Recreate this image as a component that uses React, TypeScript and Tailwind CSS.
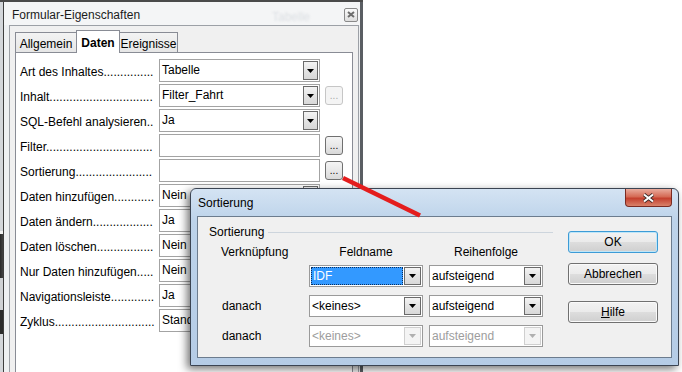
import React, { useMemo } from "react";

type Row = { label: string; value: string; list?: boolean; btn?: "on" | "off" };

const rows: Row[] = [
  { label: "Art des Inhaltes", value: "Tabelle", list: true },
  { label: "Inhalt", value: "Filter_Fahrt", list: true, btn: "off" },
  { label: "SQL-Befehl analysieren", value: "Ja", list: true },
  { label: "Filter", value: "", btn: "on" },
  { label: "Sortierung", value: "", btn: "on" },
  { label: "Daten hinzufügen", value: "Nein", list: true },
  { label: "Daten ändern", value: "Ja", list: true },
  { label: "Daten löschen", value: "Nein", list: true },
  { label: "Nur Daten hinzufügen", value: "Nein", list: true },
  { label: "Navigationsleiste", value: "Ja", list: true },
  { label: "Zyklus", value: "Standard", list: true },
];

// pad label with dots up to the field column, like the property browser does
function useDots(label: string) {
  return useMemo(() => {
    const ctx = document.createElement("canvas").getContext("2d");
    if (!ctx) return "..........";
    ctx.font = "12px 'Liberation Sans'";
    const w = ctx.measureText(label).width;
    const dot = ctx.measureText(".").width || 3.3;
    return ".".repeat(Math.max(0, Math.floor((135 - w) / dot)));
  }, [label]);
}

function Tri({ off }: { off?: boolean }) {
  return (
    <svg width="7" height="4" viewBox="0 0 7 4" className="block">
      <path d="M0 0H7L3.5 4Z" fill={off ? "#b0b0b0" : "#000"} />
    </svg>
  );
}

function DropBtn({ off, wide }: { off?: boolean; wide?: boolean }) {
  return (
    <div
      className={`${wide ? "w-[17px]" : "w-[15px]"} shrink-0 flex items-center justify-center border ${
        off
          ? "border-[#cfcfcf] bg-[#f4f4f4]"
          : "border-[#6a6a6a] bg-[linear-gradient(#f3f3f3,#e4e4e4_50%,#d8d8d8)]"
      }`}
    >
      <Tri off={off} />
    </div>
  );
}

function Ellipsis({ off }: { off?: boolean }) {
  return (
    <div
      className={`ml-[5px] w-[18px] h-[19px] rounded-[3px] border flex items-center justify-center text-[10px] leading-[10px] ${
        off
          ? "border-[#c6c6c6] bg-[#f4f4f4] text-[#a8a8a8]"
          : "border-[#707070] bg-[linear-gradient(#f4f4f4,#e8e8e8_50%,#d9d9d9)] text-black"
      }`}
    >
      ...
    </div>
  );
}

function PropRow({ row }: { row: Row }) {
  const dots = useDots(row.label);
  return (
    <div className="flex items-center h-[23px]">
      <div className="w-[137px] mr-[2px] whitespace-nowrap leading-[16px] pt-[2px]">
        {row.label}
        {dots}
      </div>
      <div className="w-[161px] h-[23px] shrink-0 flex border border-[#a3a3a3] bg-white p-[1px]">
        <div className="flex-1 pl-[1px] pt-[1px] leading-[16px] whitespace-nowrap">{row.value}</div>
        {row.list && <DropBtn />}
      </div>
      {row.btn && <Ellipsis off={row.btn === "off"} />}
    </div>
  );
}

function Combo({ text, sel, off }: { text: string; sel?: boolean; off?: boolean }) {
  return (
    <div className="w-[114px] h-[22px] shrink-0 flex border border-[#9a9a9a] bg-white p-[1px]">
      <div
        className={`flex-1 flex items-center pl-[1px] mr-[1px] whitespace-nowrap ${
          sel
            ? "bg-[#3399ff] text-white border border-dotted border-[#0b2f5c]"
            : off
            ? "text-[#9d9d9d]"
            : "text-black"
        }`}
      >
        {text}
      </div>
      <DropBtn off={off} wide />
    </div>
  );
}

function Btn({ children, def }: { children: React.ReactNode; def?: boolean }) {
  return (
    <div
      className={`h-[22px] rounded-[3px] border flex items-center justify-center bg-[linear-gradient(#f2f2f2,#ebebeb_48%,#dddddd_52%,#cfcfcf)] ${
        def
          ? "border-[#3c9bd6] shadow-[inset_0_0_0_1px_#bfe6f8]"
          : "border-[#707070] shadow-[inset_0_0_0_1px_#fafafa]"
      }`}
    >
      {children}
    </div>
  );
}

export default function App() {
  return (
    <div className="relative w-[682px] h-[372px] overflow-hidden bg-white font-['Liberation_Sans',Arial,sans-serif] text-[12px] text-black">
      <div className="w-[363px] h-[2px] bg-[#4a4a4a]" />
      <div className="flex h-[380px]">
        {/* window behind */}
        <div className="w-[3px] flex flex-col">
          <div className="h-[229px] bg-[#d3d6da]" />
          <div className="h-[3px] bg-[#f2f2f2]" />
          <div className="h-[44px] bg-[linear-gradient(90deg,#2a2a2a,#444)]" />
          <div className="h-[32px] bg-[#cfd1d4]" />
          <div className="h-[24px] bg-[#2c2c2c]" />
          <div className="flex-1 bg-[#d3d6da]" />
        </div>

        {/* Formular-Eigenschaften */}
        <div className="w-[360px] border-l border-l-[#3e3e3e] border-r-[3px] border-r-[#5a5e63] bg-[#eef0f2] flex flex-col">
          <div className="relative h-[23px] shrink-0 flex items-center justify-between pl-[8px] pr-[2px] bg-[#f4f5f6]">
            <span className="pt-[2px] text-[#1b1b1b]">Formular-Eigenschaften</span>
            <span className="absolute left-[268px] top-[6px] text-[#dcdfe3] blur-[1px]">Tabelle</span>
            <div className="mt-[2px] w-[14px] h-[14px] rounded-[2px] border border-[#8a8a8a] bg-[linear-gradient(#fafafa,#dedede)] flex items-center justify-center">
              <svg width="8" height="7" viewBox="0 0 8 7">
                <path d="M1 1L7 6M7 1L1 6" stroke="#6d6d6d" strokeWidth="2" />
              </svg>
            </div>
          </div>
          <div className="flex-1 ml-[5px] mr-[1px] border border-[#9ca0a6] bg-[#f0f0f0] pt-[4px] px-[5px] flex flex-col">
            <div className="flex items-end h-[22px] shrink-0">
              <div className="w-[61px] h-[20px] border-l border-t border-[#898c95] bg-[linear-gradient(#f3f3f3,#e6e6e6)] flex items-center justify-center pt-[2px]">
                Allgemein
              </div>
              <div className="relative z-10 -mb-[1px] w-[44px] h-[23px] border-x border-t border-[#898c95] bg-white flex items-center justify-center font-bold pt-[1px]">
                Daten
              </div>
              <div className="w-[58px] h-[20px] border-r border-t border-[#898c95] bg-[linear-gradient(#f3f3f3,#e6e6e6)] flex items-center justify-center pt-[2px]">
                Ereignisse
              </div>
            </div>
            <div className="flex-1 border border-[#898c95] bg-white pt-[6px] pl-[4px] flex flex-col gap-[2px]">
              {rows.map((r) => (
                <PropRow key={r.label} row={r} />
              ))}
            </div>
          </div>
        </div>
      </div>

      {/* Sortierung dialog */}
      <div className="absolute left-[190px] top-[188px] w-[489px] h-[178px] rounded-t-[6px] border border-[#3b4452] bg-[linear-gradient(180deg,#d4e3f3,#bdd3ea_18%,#b5cce6)] shadow-[-3px_3px_9px_rgba(0,0,0,0.55)] flex flex-col">
        <div className="h-[27px] shrink-0 flex justify-between">
          <span className="self-center pl-[7px] text-black">Sortierung</span>
          <div className="mr-[6px] w-[47px] h-[18px] rounded-b-[4px] border border-t-0 border-[#7a2b22] bg-[linear-gradient(#e9ab9d,#d56a55_45%,#c4402e_55%,#d9826a)] flex items-center justify-center">
            <svg width="13" height="10" viewBox="0 0 13 10">
              <path d="M2 1.5L11 8.5M11 1.5L2 8.5" stroke="#3a2a28" strokeWidth="3.6" />
              <path d="M2 1.5L11 8.5M11 1.5L2 8.5" stroke="#fff" strokeWidth="2" />
            </svg>
          </div>
        </div>
        <div className="mx-[6px] h-[142px] border border-[#6c7c8e] bg-[#f0f0f0] flex">
          <div className="w-[355px] flex flex-col">
            <div className="mt-[7px] h-[16px] flex items-center pl-[11px]">
              <span>Sortierung</span>
              <div className="flex-1 ml-[4px] h-px bg-[#cdd5dd]" />
            </div>
            <div className="mt-[4px] h-[16px] flex items-center pl-[23px]">
              <div className="w-[88px]">Verknüpfung</div>
              <div className="w-[114px] text-center">Feldname</div>
              <div className="ml-[6px] w-[114px] text-center">Reihenfolge</div>
            </div>
            <div className="mt-[5px] flex flex-col gap-[8px] pl-[23px]">
              <div className="flex items-center h-[22px]">
                <div className="w-[88px]" />
                <Combo text="IDF" sel />
                <div className="ml-[6px]">
                  <Combo text="aufsteigend" />
                </div>
              </div>
              <div className="flex items-center h-[22px]">
                <div className="w-[88px] pl-[1px]">danach</div>
                <Combo text="<keines>" />
                <div className="ml-[6px]">
                  <Combo text="aufsteigend" />
                </div>
              </div>
              <div className="flex items-center h-[22px]">
                <div className="w-[88px] pl-[1px]">danach</div>
                <Combo text="<keines>" off />
                <div className="ml-[6px]">
                  <Combo text="aufsteigend" off />
                </div>
              </div>
            </div>
          </div>
          <div className="ml-[15px] w-[90px] pt-[14px] flex flex-col">
            <Btn def>OK</Btn>
            <div className="mt-[10px]">
              <Btn>Abbrechen</Btn>
            </div>
            <div className="mt-[16px]">
              <Btn>
                <span>
                  <span className="underline">H</span>ilfe
                </span>
              </Btn>
            </div>
          </div>
        </div>
      </div>

      {/* red pointer */}
      <svg className="absolute inset-0 pointer-events-none" width="682" height="372">
        <line x1="343" y1="178" x2="420" y2="215.5" stroke="#e41d1d" strokeWidth="4.5" />
      </svg>
    </div>
  );
}
